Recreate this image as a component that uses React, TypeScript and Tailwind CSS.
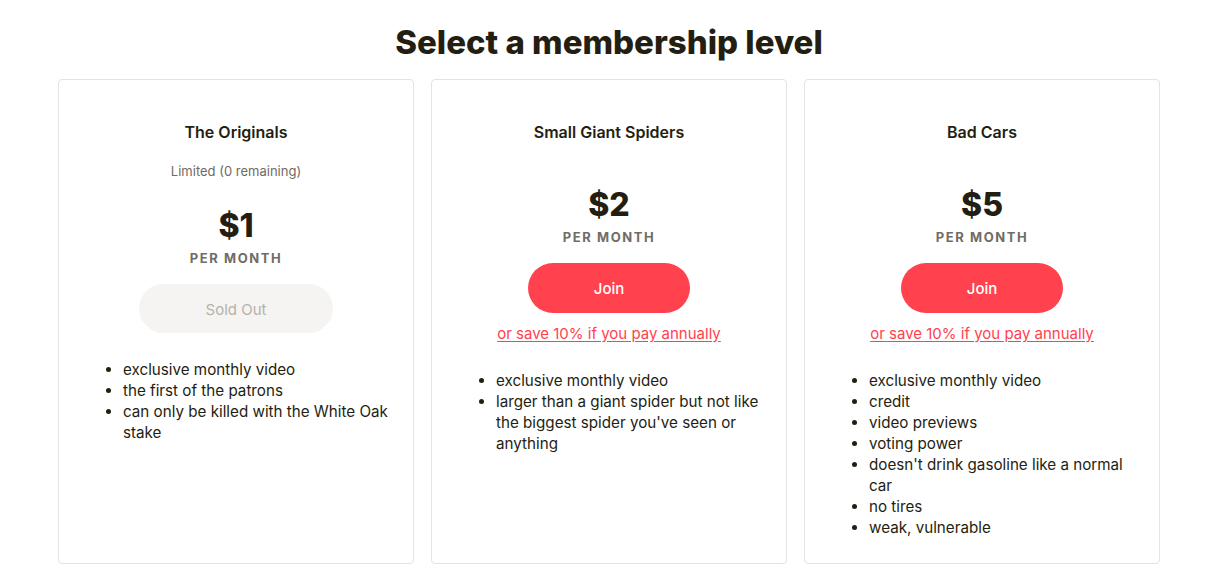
import React from "react";

type Tier = {
  name: string;
  limited?: string;
  price: string;
  soldOut?: boolean;
  features: string[];
};

const tiers: Tier[] = [
  {
    name: "The Originals",
    limited: "Limited (0 remaining)",
    price: "$1",
    soldOut: true,
    features: [
      "exclusive monthly video",
      "the first of the patrons",
      "can only be killed with the White Oak stake",
    ],
  },
  {
    name: "Small Giant Spiders",
    price: "$2",
    features: [
      "exclusive monthly video",
      "larger than a giant spider but not like the biggest spider you've seen or anything",
    ],
  },
  {
    name: "Bad Cars",
    price: "$5",
    features: [
      "exclusive monthly video",
      "credit",
      "video previews",
      "voting power",
      "doesn't drink gasoline like a normal car",
      "no tires",
      "weak, vulnerable",
    ],
  },
];

function Card({ t }: { t: Tier }) {
  return (
    <div className="flex flex-col items-center rounded-[4px] border border-[#e5e3dd] bg-white px-6 pt-[42px]">
      <div className="text-[16px] leading-[20px] font-semibold text-[#241e12]">{t.name}</div>
      {t.limited ? (
        <div className="mt-[19px] text-[13px] leading-[20px] text-[#706c64]">{t.limited}</div>
      ) : null}
      <div
        className={`${t.limited ? "mt-[25px]" : "mt-[43px]"} text-[32px] leading-[40px] font-extrabold text-[#241e12]`}
      >
        {t.price}
      </div>
      <div className="mt-[4px] text-[13px] leading-[16px] font-bold tracking-[0.12em] text-[#706c64]">
        PER MONTH
      </div>
      {t.soldOut ? (
        <div className="mt-[18px] flex h-[49px] w-[194px] items-center justify-center rounded-full bg-[#f5f4f2] pt-[4px] text-[15px] text-[#b5b2ab]">
          Sold Out
        </div>
      ) : (
        <>
          <div className="mt-[18px] flex h-[50px] w-[162px] items-center justify-center rounded-full bg-[#ff424d] pt-[3px] text-[15px] font-medium text-white">
            Join
          </div>
          <div className="mt-[11px] text-[15px] leading-[20px] text-[#ff424d] underline underline-offset-2">
            or save 10% if you pay annually
          </div>
        </>
      )}
      <ul
        className={`${t.soldOut ? "mt-[26px]" : "mt-[26px]"} w-full list-disc pl-10 text-[15.2px] leading-[21px] text-[#241e12]`}
      >
        {t.features.map((f) => (
          <li key={f}>{f}</li>
        ))}
      </ul>
    </div>
  );
}

export default function App() {
  return (
    <div
      className="min-h-[573px] w-full bg-white"
      style={{ fontFamily: "Inter, 'Noto Sans', sans-serif" }}
    >
      <h1 className="pt-[22px] text-center text-[33px] leading-[40px] font-extrabold text-[#241e12]">
        Select a membership level
      </h1>
      <div className="mx-[58px] mt-[17px] grid h-[485px] grid-cols-3 gap-[17px]">
        {tiers.map((t) => (
          <Card key={t.name} t={t} />
        ))}
      </div>
    </div>
  );
}
